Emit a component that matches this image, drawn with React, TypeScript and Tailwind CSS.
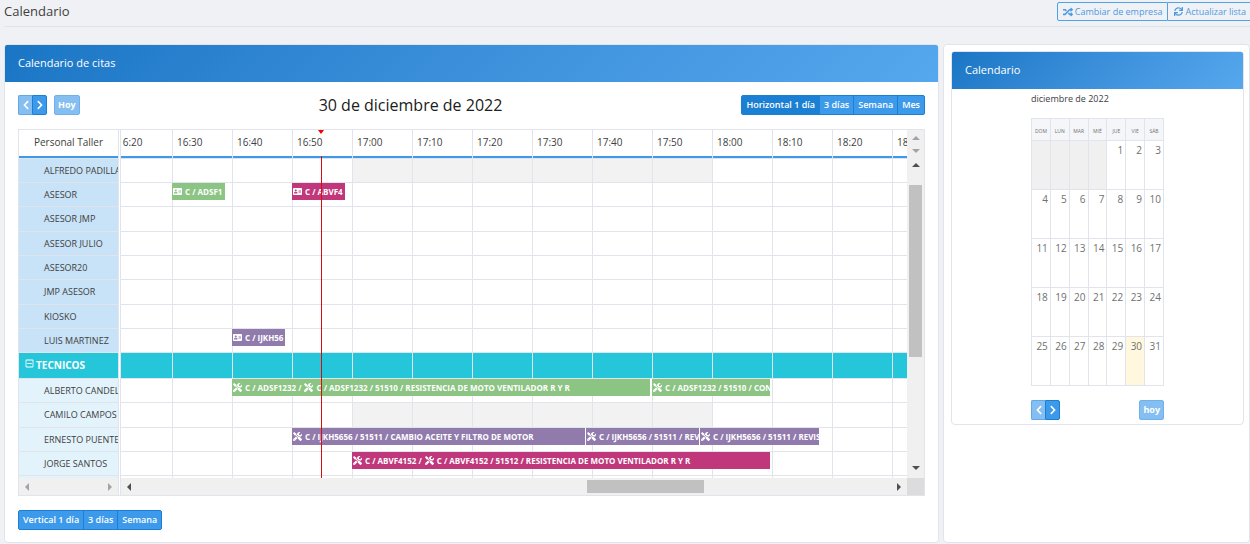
import React from 'react';
import clsx from 'clsx';
import {
  FaAddressCard,
  FaChevronLeft,
  FaChevronRight,
  FaRandom,
  FaRegMinusSquare,
  FaSync,
  FaTools,
} from 'react-icons/fa';

type Tone = 'green' | 'pink' | 'purple';

interface CalendarEvent {
  left: number;
  width: number;
  tone: Tone;
  icon: 'card' | 'tools';
  parts: string[];
}

interface Resource {
  name: string;
  kind: 'asesor' | 'group' | 'tecnico';
  tall?: boolean;
  closed?: boolean;
  events?: CalendarEvent[];
}

const TONES: Record<Tone, string> = {
  green: 'bg-[#8cc484]',
  pink: 'bg-[#c0387b]',
  purple: 'bg-[#917bad]',
};

const SLOTS = ['16:20', '16:30', '16:40', '16:50', '17:00', '17:10', '17:20', '17:30', '17:40', '17:50', '18:00', '18:10', '18:20', '18:30'];

const RESOURCES: Resource[] = [
  { name: 'ALFREDO PADILLA', kind: 'asesor', closed: true },
  {
    name: 'ASESOR',
    kind: 'asesor',
    events: [
      { left: 59, width: 53, tone: 'green', icon: 'card', parts: ['C / ADSF1'] },
      { left: 179, width: 53, tone: 'pink', icon: 'card', parts: ['C / ABVF4'] },
    ],
  },
  { name: 'ASESOR JMP', kind: 'asesor', tall: true },
  { name: 'ASESOR JULIO', kind: 'asesor' },
  { name: 'ASESOR20', kind: 'asesor' },
  { name: 'JMP ASESOR', kind: 'asesor', tall: true },
  { name: 'KIOSKO', kind: 'asesor' },
  {
    name: 'LUIS MARTINEZ',
    kind: 'asesor',
    events: [{ left: 119, width: 53, tone: 'purple', icon: 'card', parts: ['C / IJKH56'] }],
  },
  { name: 'TECNICOS', kind: 'group' },
  {
    name: 'ALBERTO CANDEL',
    kind: 'tecnico',
    events: [
      { left: 119, width: 418, tone: 'green', icon: 'tools', parts: ['C / ADSF1232 /', 'C / ADSF1232 / 51510 / RESISTENCIA DE MOTO VENTILADOR R Y R'] },
      { left: 539, width: 118, tone: 'green', icon: 'tools', parts: ['C / ADSF1232 / 51510 / CON'] },
    ],
  },
  { name: 'CAMILO CAMPOS', kind: 'tecnico', tall: true, closed: true },
  {
    name: 'ERNESTO PUENTE',
    kind: 'tecnico',
    events: [
      { left: 179, width: 293, tone: 'purple', icon: 'tools', parts: ['C / IJKH5656 / 51511 / CAMBIO ACEITE Y FILTRO DE MOTOR'] },
      { left: 473, width: 113, tone: 'purple', icon: 'tools', parts: ['C / IJKH5656 / 51511 / REV'] },
      { left: 587, width: 119, tone: 'purple', icon: 'tools', parts: ['C / IJKH5656 / 51511 / REVIS'] },
    ],
  },
  {
    name: 'JORGE SANTOS',
    kind: 'tecnico',
    events: [
      { left: 239, width: 418, tone: 'pink', icon: 'tools', parts: ['C / ABVF4152 /', 'C / ABVF4152 / 51512 / RESISTENCIA DE MOTO VENTILADOR R Y R'] },
    ],
  },
];

const WEEKDAYS = ['DOM', 'LUN', 'MAR', 'MIÉ', 'JUE', 'VIE', 'SÁB'];

const WEEKS: (number | null)[][] = [
  [null, null, null, null, 1, 2, 3],
  [4, 5, 6, 7, 8, 9, 10],
  [11, 12, 13, 14, 15, 16, 17],
  [18, 19, 20, 21, 22, 23, 24],
  [25, 26, 27, 28, 29, 30, 31],
];

const rowHeight = (r: Resource) => (r.kind === 'group' ? 'h-[26px]' : r.tall ? 'h-[25px]' : 'h-6');

const Arrow: React.FC<{ dir: 'up' | 'down' | 'left' | 'right'; muted?: boolean }> = ({ dir, muted }) => {
  const points = {
    up: '0,6 4,2 8,6',
    down: '0,2 4,6 8,2',
    left: '6,0 2,4 6,8',
    right: '2,0 6,4 2,8',
  };
  return (
    <svg viewBox="0 0 8 8" className={clsx('size-2 shrink-0', muted ? 'fill-[#a3a3a3]' : 'fill-[#505050]')}>
      <polygon points={points[dir]} />
    </svg>
  );
};

const CardHeader: React.FC<{ children: React.ReactNode }> = ({ children }) => (
  <h2 className="rounded-t-xs bg-linear-135 from-[#1976c5] via-[#3c90db] to-[#55a8ed] px-[13px] pt-[9px] pb-[11px] text-[11px] leading-[17px] text-white">
    {children}
  </h2>
);

const NavButtons: React.FC = () => (
  <div className="flex">
    <button aria-label="Anterior" className="flex h-5 w-[14px] items-center justify-center rounded-l-xs border border-r-0 border-[#62a9e4] bg-[#85bff1] text-white">
      <FaChevronLeft size={10} />
    </button>
    <button aria-label="Siguiente" className="flex h-5 w-[15px] items-center justify-center rounded-r-xs border border-[#1b7fd3] bg-[#3d9aea] text-white">
      <FaChevronRight size={10} />
    </button>
  </div>
);

const TodayButton: React.FC<{ label: string }> = ({ label }) => (
  <button className="h-5 rounded-xs border border-[#6fb2eb] bg-[#85bff1] px-[3px] text-[9px] leading-4 font-bold text-white">{label}</button>
);

const ViewButtons: React.FC<{ labels: string[]; active?: number }> = ({ labels, active }) => (
  <div className="flex w-max overflow-hidden rounded-xs border border-[#1b7fd3] bg-[#3d9aea]">
    {labels.map((label, i) => (
      <button
        key={label}
        className={clsx(
          'h-[18px] px-1 text-[9px] leading-4 font-semibold text-white',
          i > 0 && 'border-l border-[#1b7fd3]',
          i === active && 'bg-[#1b7fd3]',
        )}
      >
        {label}
      </button>
    ))}
  </div>
);

const EventBar: React.FC<{ event: CalendarEvent }> = ({ event }) => {
  const Icon = event.icon === 'card' ? FaAddressCard : FaTools;
  return (
    <a
      href="#"
      className={clsx('absolute top-0 flex h-[17px] items-center gap-[3px] overflow-hidden pl-px text-[8px] font-bold whitespace-nowrap text-white', TONES[event.tone])}
      style={{ left: event.left, width: event.width }}
    >
      {event.parts.map((part) => (
        <React.Fragment key={part}>
          <Icon size={9} className="shrink-0" />
          <span>{part}</span>
        </React.Fragment>
      ))}
    </a>
  );
};

const ResourcePane: React.FC = () => (
  <div className="flex w-[100px] shrink-0 flex-col overflow-hidden border-r border-[#e2e4ec]">
    <div className="flex h-7 items-center justify-center border-b-2 border-[#3d9aea] pb-[2px] text-[10px]">Personal Taller</div>
    <div className="h-80 overflow-hidden border-t border-[#e2e4ec]">
      {RESOURCES.map((r) => (
        <div
          key={r.name}
          className={clsx(
            'flex items-center border-b border-[#e2e4ec] text-[9px] whitespace-nowrap',
            rowHeight(r),
            r.kind === 'asesor' && 'bg-[#c8e2f7] pl-[25px]',
            r.kind === 'tecnico' && 'bg-[#e3f3fc] pl-[25px]',
            r.kind === 'group' && 'gap-[2px] bg-[#26c6da] pl-[6px] text-[10px] font-bold text-white',
          )}
        >
          {r.kind === 'group' && (
            <button aria-label="Contraer grupo" className="mb-1">
              <FaRegMinusSquare size={9} />
            </button>
          )}
          {r.name}
        </div>
      ))}
      <div className="h-6 bg-[#e3f3fc]" />
    </div>
    <div className="flex h-[17px] items-center justify-between bg-[#f0f0f0] px-1">
      <Arrow dir="left" muted />
      <Arrow dir="right" muted />
    </div>
  </div>
);

const Timeline: React.FC = () => (
  <div className="flex min-w-0 flex-1 flex-col border-l border-[#e2e4ec]">
    <div className="flex">
      <div className="relative h-[348px] min-w-0 flex-1 overflow-hidden">
        <div className="-ml-2 w-max">
          <div className="flex h-7">
            {SLOTS.map((slot) => (
              <div key={slot} className="flex w-[60px] border-r border-[#e2e4ec]">
                <div className="flex flex-1 items-center border-b-2 border-[#3d9aea] pb-[2px] pl-1 text-[10px]">{slot}</div>
              </div>
            ))}
          </div>
          <div className="border-t border-[#e2e4ec]">
            {RESOURCES.map((r) => (
              <div key={r.name} className={clsx('relative flex border-b border-[#e2e4ec]', rowHeight(r), r.kind === 'group' && 'bg-[#26c6da]')}>
                {SLOTS.map((slot) => (
                  <div
                    key={slot}
                    className={clsx('w-[60px] border-r border-[#e2e4ec]', r.closed && slot.startsWith('17') && 'bg-[#f2f2f2]')}
                  />
                ))}
                {r.events?.map((event) => <EventBar key={event.left} event={event} />)}
              </div>
            ))}
            <div className="flex h-6">
              {SLOTS.map((slot) => (
                <div key={slot} className="w-[60px] border-r border-[#e2e4ec]" />
              ))}
            </div>
          </div>
        </div>
        {/* current time */}
        <svg viewBox="0 0 6 4" className="absolute top-0 left-[197px] h-1 w-[6px] fill-[#f00000]">
          <polygon points="0,0 6,0 3,4" />
        </svg>
        <div className="absolute top-[26px] bottom-0 left-[200px] w-px bg-[#d90d0d]" />
      </div>
      <div className="flex w-[17px] shrink-0 flex-col items-center bg-[#f0f0f0]">
        <div className="flex h-[29px] flex-col justify-between py-1">
          <Arrow dir="up" muted />
          <Arrow dir="down" muted />
        </div>
        <div className="flex flex-1 flex-col items-center pt-[2px] pb-[6px]">
          <Arrow dir="up" />
          <div className="mt-4 h-[172px] w-[13px] bg-[#c1c1c1]" />
          <div className="flex-1" />
          <Arrow dir="down" />
        </div>
      </div>
    </div>
    <div className="flex h-[17px]">
      <div className="flex flex-1 items-center bg-[#f0f0f0] px-1">
        <Arrow dir="left" />
        <div className="flex-[454]" />
        <div className="h-[13px] flex-[117] bg-[#c1c1c1]" />
        <div className="flex-[191]" />
        <Arrow dir="right" />
      </div>
      <div className="w-[17px] bg-[#dcdcdc]" />
    </div>
  </div>
);

const MonthTable: React.FC = () => (
  <table className="w-full table-fixed border-collapse border border-[#e2e4ec] text-[10px] text-[#707070]">
    <thead>
      <tr className="h-[22px] bg-[#f5f6f9]">
        {WEEKDAYS.map((day) => (
          <th key={day} className="border border-[#e2e4ec] p-0 pt-1 text-[5px] font-normal">
            {day}
          </th>
        ))}
      </tr>
    </thead>
    <tbody>
      {WEEKS.map((week, i) => (
        <tr key={i} className="h-[49px]">
          {week.map((day, j) => (
            <td
              key={j}
              className={clsx(
                'border border-[#e2e4ec] p-0 pt-[3px] pr-[2px] text-right align-top leading-[13px]',
                day === null && 'bg-[#f0f0f0]',
                day === 30 && 'bg-[#fff8df]',
              )}
            >
              {day}
            </td>
          ))}
        </tr>
      ))}
    </tbody>
  </table>
);

export default function App() {
  return (
    <div className="min-h-screen overflow-hidden bg-[#f0f1f5] font-['Open_Sans',sans-serif] text-[#404040]">
      <header className="ml-1 flex h-[27px] items-start justify-between border-b border-[#e2e4ec]">
        <h1 className="pt-[2px] text-[13px] leading-[18px]">Calendario</h1>
        <div className="flex pt-[2px] text-[9px] text-[#4c9be2]">
          <button className="flex h-[19px] items-center gap-[2px] rounded-l-xs border border-[#4ba3ec] px-[5px]">
            <FaRandom size={10} />
            Cambiar de empresa
          </button>
          <button className="flex h-[19px] items-center gap-[2px] border-y border-[#4ba3ec] pr-1 pl-[6px]">
            <FaSync size={9} />
            Actualizar lista
          </button>
        </div>
      </header>

      <main className="mt-[17px] ml-1 flex gap-1">
        <section className="min-w-0 flex-1 rounded-sm border border-[#e2e4ec] bg-white">
          <CardHeader>Calendario de citas</CardHeader>
          <div className="px-[13px] pt-[13px] pb-3">
            <div className="flex items-center justify-between">
              <div className="flex gap-[7px]">
                <NavButtons />
                <TodayButton label="Hoy" />
              </div>
              <h2 className="text-base leading-5 text-[#202020]">30 de diciembre de 2022</h2>
              <ViewButtons labels={['Horizontal 1 día', '3 días', 'Semana', 'Mes']} active={0} />
            </div>
            <div className="mt-[14px] flex gap-px border border-[#e2e4ec]">
              <ResourcePane />
              <Timeline />
            </div>
            <div className="mt-[14px]">
              <ViewButtons labels={['Vertical 1 día', '3 días', 'Semana']} />
            </div>
          </div>
        </section>

        <aside className="w-[307px] shrink-0 rounded-sm border border-[#e2e4ec] bg-white py-[6px] pr-[5px] pl-[7px]">
          <div className="rounded-sm border border-[#e2e4ec]">
            <CardHeader>Calendario</CardHeader>
            <div className="mx-auto w-[133px] pt-[2px] pb-1">
              <h3 className="mb-[11px] text-[9px] leading-4">diciembre de 2022</h3>
              <MonthTable />
              <div className="mt-[14px] flex justify-between">
                <NavButtons />
                <TodayButton label="hoy" />
              </div>
            </div>
          </div>
        </aside>
      </main>
    </div>
  );
}
